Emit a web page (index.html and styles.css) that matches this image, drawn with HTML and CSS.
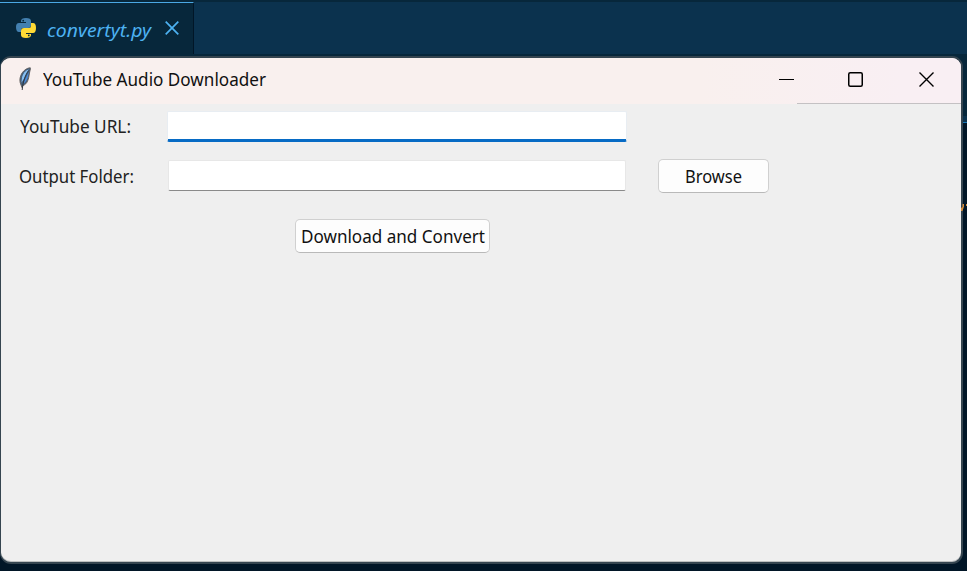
FILE: index.html
```html
<!DOCTYPE html>
<html lang="en">
<head>
<meta charset="utf-8">
<title>YouTube Audio Downloader</title>
<link rel="stylesheet" href="styles.css">
</head>
<body>
<header class="tabs">
  <div class="tab">
    <svg class="python" viewBox="0 0 20 20">
      <path fill="#4380b0" d="M5 3Q5 0 10 0Q15 0 15 3V7Q15 10 12 10H7Q5 10 5 12V14H3Q0 14 0 9Q0 5 3 5H10V4H5Z"/>
      <path fill="#ffda35" d="M15 17Q15 20 10 20Q5 20 5 17V13Q5 10 8 10H13Q15 10 15 8V5H17Q20 5 20 10Q20 15 17 15H10V16H15Z"/>
      <circle cx="7.2" cy="2.7" r=".9" fill="#07273b"/><circle cx="12.8" cy="17.4" r=".9" fill="#07273b"/>
    </svg>
    <span class="filename"><span class="fit">convertyt.py</span></span>
    <svg class="tab-close" viewBox="0 0 14 14"><path d="M.7.7 13.3 13.3M13.3.7.7 13.3" stroke="#4db2f2" stroke-width="1.7"/></svg>
  </div>
</header>
<div class="code"></div>
<main class="window">
  <div class="titlebar">
    <svg class="feather" viewBox="0 0 14 24">
      <path d="M12.3 .8C9 .8 4.5 4 2.8 8.5C1.5 12 1.6 15 3 18L4 20.5L5 18.5C9.5 17 10.6 12 11.3 7C11.7 4 12.8 2 12.3 .8Z" fill="#46617f" stroke="#5f5c5b" stroke-width=".9"/>
      <path d="M10.8 2.5C7.5 3.5 5 6.5 4.1 10L3.5 15.5L5.5 12.5Z" fill="#86bff2"/>
      <path d="M10.8 5 5.2 16.5C8.8 14.5 9.9 11 10.8 5Z" fill="#4d8fe0"/>
      <path d="M10.6 3.5C7.6 7.5 5 14 4.2 23" fill="none" stroke="#252b35" stroke-width=".9"/>
    </svg>
    <h1><span class="fit">YouTube Audio Downloader</span></h1>
    <div class="controls">
      <svg class="minimize" viewBox="0 0 15 16"><path d="M0 7.5H15" stroke="#000"/></svg>
      <svg class="maximize" viewBox="0 0 15 15"><rect x=".75" y=".75" width="13.5" height="13.5" rx="1.5" fill="none" stroke="#000" stroke-width="1.5"/></svg>
      <svg class="close" viewBox="0 0 15 15"><path d="M.5.5 14.5 14.5M14.5.5.5 14.5" stroke="#000" stroke-width="1.4"/></svg>
    </div>
  </div>
  <form class="form">
    <label class="label url-label" for="url"><span class="fit">YouTube URL:</span></label>
    <input class="field focused" id="url" type="text">
    <label class="label folder-label" for="folder"><span class="fit">Output Folder:</span></label>
    <input class="field" id="folder" type="text">
    <button class="browse" type="button"><span class="fit">Browse</span></button>
    <button class="convert" type="button"><span class="fit">Download and Convert</span></button>
  </form>
</main>
<svg class="code-mark" viewBox="0 0 6 7"><path d="M1.5 0H3V2.5L1.5 7H0V4L1.5 3ZM5 0H6V2H5Z" fill="#d88f3c"/></svg>
<script src="fit.js"></script>
</body>
</html>
```
FILE: styles.css
```css
* { box-sizing: border-box; }
body {
  margin: 0;
  width: 967px;
  height: 571px;
  overflow: hidden;
  position: relative;
  background: #011627;
  font-family: "Noto Sans", sans-serif;
}
svg { display: block; flex: none; }
.fit { display: inline-block; white-space: nowrap; transform-origin: 0 50%; }
.tabs {
  height: 54px;
  background: #0b324e;
  border-top: 2px solid #07273b;
}
.tab {
  width: 194px;
  height: 54px;
  display: flex;
  align-items: center;
  padding: 0 0 4px 16px;
  background: #07273b;
  border-top: 1px solid #4aa8e4;
  border-right: 1px solid #011627;
}
.python { width: 20px; height: 20px; }
.filename {
  --w: 104px;
  width: 104px;
  margin: 5px 14px 0 11px;
  color: #4db2f2;
  font: italic 18.5px/26px "Noto Sans", sans-serif;
}
.tab-close { width: 14px; height: 14px; }
.code {
  height: 517px;
  background: linear-gradient(#07273b 0 62px, #0b324e 62px 68px, #1877b5 68px 69px, #011627 69px);
}
.code-mark {
  position: absolute;
  left: 961px;
  top: 204px;
  width: 6px;
  height: 7px;
}
.window {
  position: absolute;
  left: 0;
  top: 56px;
  width: 963px;
  height: 508px;
  border: 2px solid #354550;
  border-left-width: 1px;
  border-radius: 11px;
  overflow: hidden;
  background: #efefef;
  box-shadow: inset 0 -1px #bdbfc0;
}
.titlebar {
  height: 46px;
  display: flex;
  align-items: center;
  padding-left: 17px;
  background: linear-gradient(90deg, #f9f0ee 0 700px, #f9eff3 900px);
}
.feather { width: 14px; height: 24px; margin-top: -4px; }
h1 {
  --w: 223px;
  width: 223px;
  margin: -5px 0 0 11px;
  color: #111;
  font: 18px/26px "Noto Sans", sans-serif;
}
.controls {
  width: 164px;
  height: 46px;
  margin-left: auto;
  display: flex;
  align-items: center;
  padding-bottom: 2px;
  border-bottom: 1px solid #c4c1c3;
}
.minimize { width: 15px; height: 16px; margin-left: -18px; }
.maximize { width: 15px; height: 15px; margin-left: 54px; }
.close { width: 15px; height: 15px; margin-left: 56px; }
.form {
  display: grid;
  grid-template-columns: 148px 460px 30px 112px;
  grid-template-rows: 54px 50px 52px;
  padding-left: 18px;
  align-items: start;
}
.label {
  grid-column: 1;
  color: #222;
  font: 18px/24px "Noto Sans", sans-serif;
}
.url-label { --w: 111px; padding-left: 1px; margin-top: 10px; }
.folder-label { --w: 115px; margin-top: 6px; }
.field {
  grid-column: 2;
  justify-self: center;
  width: 458px;
  height: 31px;
  margin: 2px 0 0;
  padding: 0 6px;
  border: 1px solid #e7e7e7;
  border-bottom-color: #8a8a8a;
  border-radius: 2px;
  outline: 0;
  background: #fff;
  font: 18px "Noto Sans", sans-serif;
}
.focused {
  width: 460px;
  height: 31px;
  margin-top: 7px;
  border: 1px solid #e8edf2;
  border-bottom: 3px solid #076bc5;
}
button {
  height: 34px;
  margin: 0;
  padding: 0;
  display: flex;
  justify-content: center;
  align-items: center;
  border: 1px solid #d0d0d0;
  border-bottom-color: #b9b9b9;
  border-radius: 5px;
  background: #fdfdfd;
  color: #111;
  font: 18px/24px "Noto Sans", sans-serif;
}
.browse { --w: 57px; grid-column: 4; width: 111px; margin: 1px 0 0 1px; }
.convert { --w: 184px; grid-column: 2; width: 195px; margin: 11px 0 0 128px; }
button .fit { width: var(--w); }
```
FILE: fit.js
```js
// Condense each label to the width given by its container.
document.querySelectorAll('.fit').forEach((el) => {
  const target = parseFloat(getComputedStyle(el).getPropertyValue('--w'));
  el.style.width = 'max-content';
  const natural = el.getBoundingClientRect().width;
  el.style.width = `${target}px`;
  el.style.transform = `scaleX(${target / natural})`;
});
```
